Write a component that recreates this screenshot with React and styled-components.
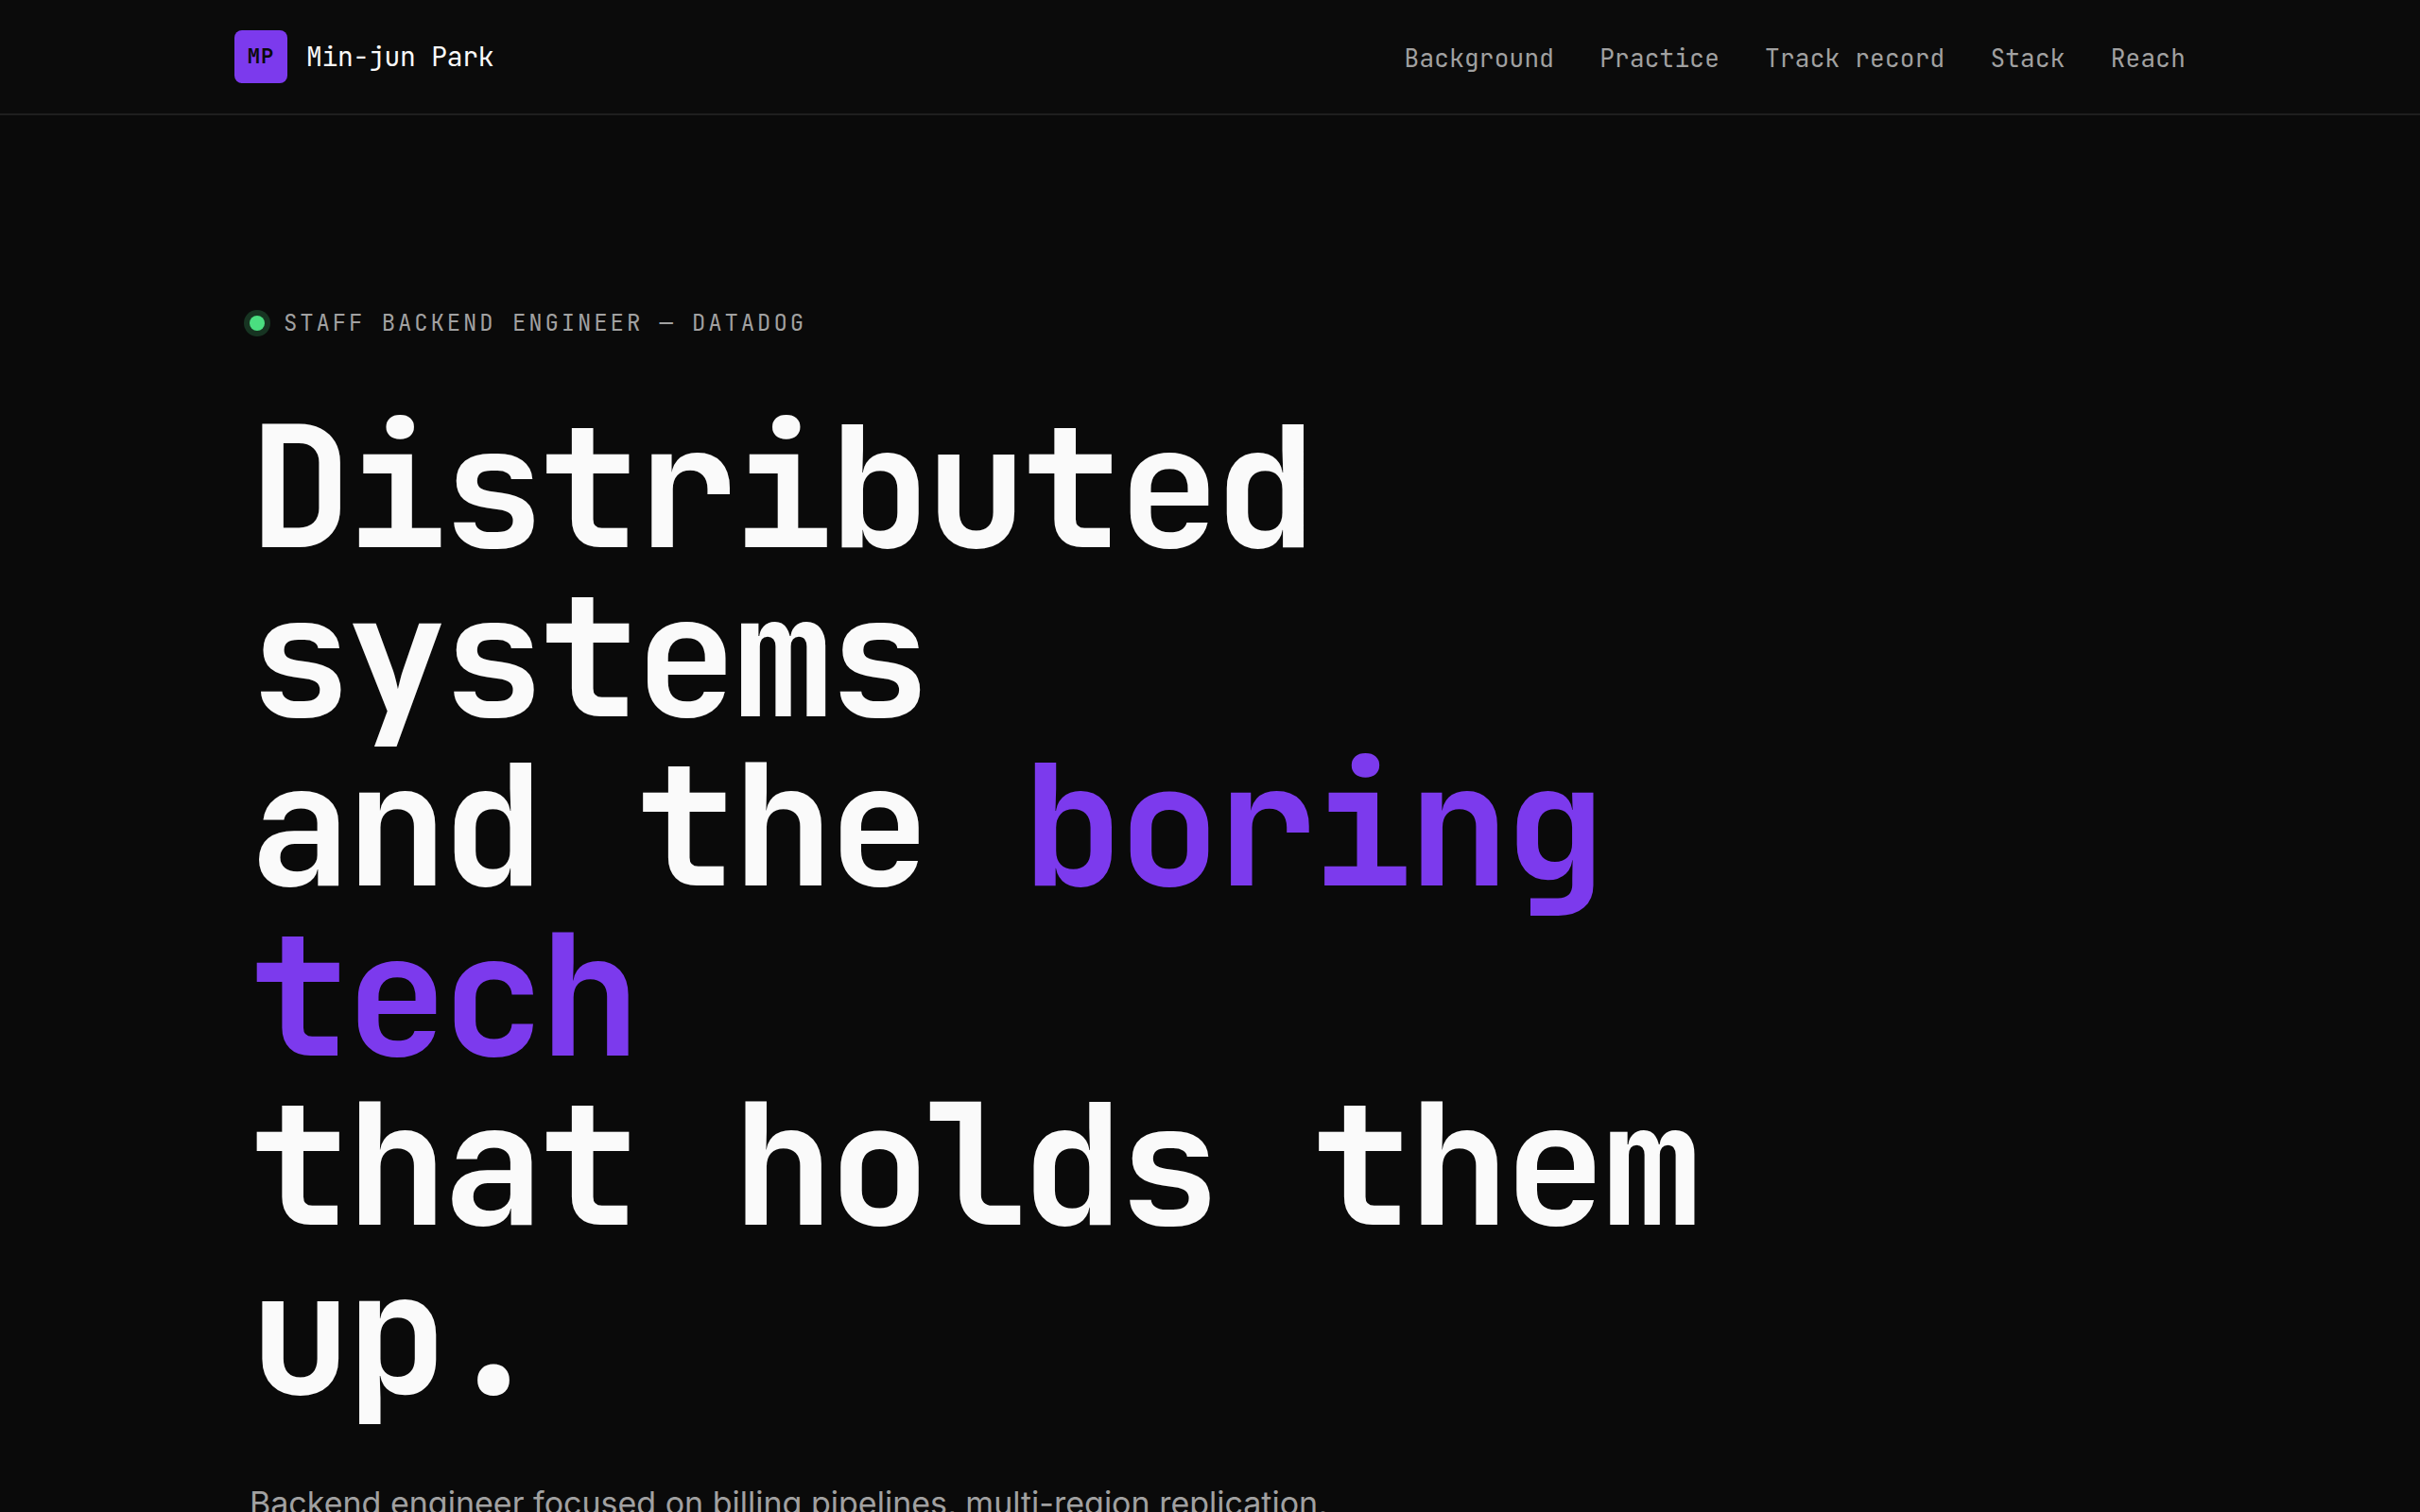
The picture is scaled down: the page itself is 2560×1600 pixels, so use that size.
import React from "react";
import styled, { createGlobalStyle } from "styled-components";

const mono = '"JetBrains Mono", "DejaVu Sans Mono", monospace';

const GlobalStyle = createGlobalStyle`
  * {
    box-sizing: border-box;
  }
  body {
    margin: 0;
    background: #0a0a0a;
    color: #fafafa;
    font-family: Inter, sans-serif;
    font-size: 32px;
    line-height: 1.6;
    -webkit-font-smoothing: antialiased;
  }
`;

const Header = styled.header`
  background: #0b0b0b;
  border-bottom: 2px solid #1f1f1f;
`;

const HeaderInner = styled.div`
  max-width: 2160px;
  margin: 0 auto;
  padding: 32px 48px;
  display: flex;
  align-items: center;
  justify-content: space-between;
`;

const Brand = styled.a`
  display: flex;
  align-items: center;
  gap: 20px;
  color: #fafafa;
  font-family: ${mono};
  font-size: 28px;
  line-height: 44px;
  letter-spacing: -0.01em;
  text-decoration: none;
`;

const Mark = styled.span`
  width: 56px;
  height: 56px;
  display: grid;
  place-items: center;
  border-radius: 8px;
  background: #7c3aed;
  color: #0a0a0a;
  font-size: 22px;
  font-weight: 700;
  letter-spacing: 0.05em;
`;

const NavList = styled.ul`
  margin: 0;
  padding: 0;
  display: flex;
  gap: 48px;
  list-style: none;
`;

const NavLink = styled.a`
  color: #a1a1a1;
  font-family: ${mono};
  font-size: 26px;
  letter-spacing: 0.01em;
  text-decoration: none;
  &:hover {
    color: #fafafa;
  }
`;

const Hero = styled.section`
  max-width: 2160px;
  margin: 0 auto;
  padding: 200px 64px;
`;

const Eyebrow = styled.p`
  margin: 0 0 63px;
  display: flex;
  align-items: center;
  gap: 20px;
  color: #a1a1a1;
  font-family: ${mono};
  font-size: 24px;
  line-height: 40px;
  letter-spacing: 0.12em;
  text-transform: uppercase;
`;

const StatusDot = styled.span`
  width: 16px;
  height: 16px;
  border-radius: 50%;
  background: #4ade80;
  box-shadow: 0 0 0 6px rgba(74, 222, 128, 0.2);
`;

const Title = styled.h1`
  max-width: 1800px;
  margin: 0 0 64px;
  font-family: ${mono};
  font-size: 7vw;
  font-weight: 700;
  line-height: 1;
  letter-spacing: -0.03em;
`;

const Accent = styled.span`
  color: #7c3aed;
`;

const Lead = styled.p`
  max-width: 1240px;
  margin: 0;
  color: #a1a1a1;
  font-size: 34px;
  line-height: 54px;
`;

const links = [
  { label: "Background", href: "#background" },
  { label: "Practice", href: "#practice" },
  { label: "Track record", href: "#track-record" },
  { label: "Stack", href: "#stack" },
  { label: "Reach", href: "#reach" },
];

function App() {
  return (
    <>
      <GlobalStyle />
      <Header>
        <HeaderInner>
          <Brand href="#top">
            <Mark>MP</Mark>
            Min-jun Park
          </Brand>
          <nav>
            <NavList>
              {links.map((link) => (
                <li key={link.href}>
                  <NavLink href={link.href}>{link.label}</NavLink>
                </li>
              ))}
            </NavList>
          </nav>
        </HeaderInner>
      </Header>
      <main>
        <Hero id="top">
          <Eyebrow>
            <StatusDot />
            Staff Backend Engineer — Datadog
          </Eyebrow>
          <Title>
            Distributed systems
            <br />
            and the <Accent>boring tech</Accent>
            <br />
            that holds them up.
          </Title>
          <Lead>
            Backend engineer focused on billing pipelines, multi-region
            replication,
          </Lead>
        </Hero>
      </main>
    </>
  );
}

export default App;
